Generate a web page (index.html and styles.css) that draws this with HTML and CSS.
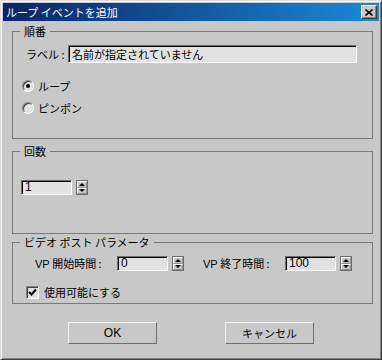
FILE: index.html
```html
<!doctype html>
<html lang="ja">
  <head>
    <meta charset="utf-8">
    <title>ループ イベントを追加</title>
    <link rel="stylesheet" href="styles.css">
  </head>
  <body>
    <div class="window">
      <div class="titlebar">
        <span class="title">ループ イベントを追加</span>
        <div class="close">
          <svg width="8" height="7" viewBox="0 0 8 7"><path d="M0.5 0.5 L7.5 6.5 M7.5 0.5 L0.5 6.5" stroke="#000" stroke-width="1.6" fill="none"/></svg>
        </div>
      </div>

      <div class="content">
        <!-- 順番 -->
        <div class="group group-order">
          <div class="legend">順番</div>
          <div class="label-row">
            <span class="label">ラベル :</span>
            <div class="field field-name">名前が指定されていません</div>
          </div>
          <div class="radio-row radio-first"><span class="radio checked"></span>ループ</div>
          <div class="radio-row"><span class="radio"></span>ピンポン</div>
        </div>

        <!-- 回数 -->
        <div class="group group-count">
          <div class="legend">回数</div>
          <div class="count-row">
            <div class="field num">1</div>
            <div class="spin"><span class="up"></span><span class="down"></span></div>
          </div>
        </div>

        <!-- ビデオ ポスト -->
        <div class="group group-vp">
          <div class="legend">ビデオ ポスト パラメータ</div>
          <div class="vp-row">
            <span class="vp-label"><span class="latin">VP</span> 開始時間 :</span>
            <div class="field num">0</div>
            <div class="spin"><span class="up"></span><span class="down"></span></div>
            <span class="vp-label vp-end"><span class="latin">VP</span> 終了時間 :</span>
            <div class="field num">100</div>
            <div class="spin"><span class="up"></span><span class="down"></span></div>
          </div>
          <div class="check-row">
            <span class="checkbox">
              <svg width="9" height="9" viewBox="0 0 9 9"><path d="M1 4 L3.5 6.5 L8 1.5" stroke="#000" stroke-width="2" fill="none"/></svg>
            </span>使用可能にする
          </div>
        </div>

        <div class="buttons">
          <button class="btn latin">OK</button>
          <button class="btn">キャンセル</button>
        </div>
      </div>
    </div>
  </body>
</html>
```

FILE: styles.css
```css
* {
  margin: 0;
  padding: 0;
  box-sizing: border-box;
}

body {
  font-family: "Noto Sans CJK JP", sans-serif;
  font-size: 11px;
  line-height: 14px;
  color: #000;
  background: #c8c8c8;
}

.latin {
  font-family: "Liberation Sans", "Noto Sans CJK JP", sans-serif;
}

.window {
  width: 382px;
  height: 360px;
  padding: 2px;
  background: #c8c8c8;
  border: 1px solid;
  border-color: #dcdcdc #404040 #404040 #dcdcdc;
  box-shadow: inset 1px 1px #fff, inset -1px -1px #808080;
}

.titlebar {
  height: 18px;
  display: flex;
  align-items: center;
  justify-content: space-between;
  padding: 0 2px 0 3px;
  background: linear-gradient(to right, #0a246a, #1a8ad6);
  color: #fff;
}

.title {
  font-size: 11px;
}

.close {
  width: 16px;
  height: 14px;
  display: flex;
  align-items: center;
  justify-content: center;
  background: #c8c8c8;
  border: 1px solid;
  border-color: #fff #404040 #404040 #fff;
  box-shadow: inset -1px -1px #808080;
}

.content {
  padding: 0 6px 0 9px;
}

.group {
  border: 1px solid #7a7a7a;
}

.legend {
  width: max-content;
  margin: -8px 0 0 7px;
  padding: 0 4px;
  background: #c8c8c8;
}

.group-order {
  margin-top: 10px;
  height: 108px;
}

.group-count {
  margin-top: 12px;
  height: 83px;
}

.group-vp {
  margin-top: 8px;
  height: 62px;
}

.field {
  background: #e2e2e2;
  border: 1px solid;
  border-color: #6e6e6e #fff #fff #6e6e6e;
  box-shadow: inset 1px 1px #000;
  padding-left: 3px;
  white-space: nowrap;
  overflow: hidden;
}

.label-row {
  margin-top: 7px;
  padding-left: 13px;
  display: flex;
  align-items: center;
}

.label {
  width: 42px;
}

.field-name {
  width: 289px;
  height: 18px;
  line-height: 15px;
  padding-top: 1px;
}

.radio-row {
  display: flex;
  align-items: center;
  height: 14px;
  margin-top: 8px;
  padding-left: 9px;
}

.radio-first {
  margin-top: 16px;
}

.radio {
  position: relative;
  width: 12px;
  height: 12px;
  margin-right: 4px;
  border-radius: 50%;
  border: 1px solid;
  border-color: #808080 #fff #fff #808080;
  box-shadow: inset 1px 1px #404040;
  background: #e2e2e2;
}

.radio.checked::after {
  content: "";
  position: absolute;
  left: 3px;
  top: 3px;
  width: 4px;
  height: 4px;
  border-radius: 50%;
  background: #000;
}

.num {
  width: 51px;
  height: 15px;
  line-height: 12px;
  font-family: "Liberation Sans", sans-serif;
  font-size: 12px;
}

.count-row {
  display: flex;
  margin-top: 22px;
  padding-left: 8px;
}

.spin {
  display: flex;
  flex-direction: column;
  width: 12px;
  height: 15px;
  margin-left: 4px;
  border: 1px solid #6e6e6e;
}

.spin span {
  flex: 1;
  display: flex;
  align-items: center;
  justify-content: center;
  border: 1px solid;
  border-color: #fff #909090 #909090 #fff;
}

.spin .up::after {
  content: "";
  border: 3px solid transparent;
  border-top: none;
  border-bottom: 3px solid #000;
}

.spin .down::after {
  content: "";
  border: 3px solid transparent;
  border-bottom: none;
  border-top: 3px solid #000;
}

.vp-row {
  display: flex;
  align-items: center;
  margin-top: 7px;
  padding-left: 22px;
}

.vp-label {
  width: 82px;
}

.vp-end {
  margin-left: 19px;
}

.check-row {
  display: flex;
  align-items: center;
  height: 14px;
  margin-top: 14px;
  padding-left: 13px;
}

.checkbox {
  width: 13px;
  height: 13px;
  margin-right: 5px;
  display: flex;
  align-items: center;
  justify-content: center;
  background: #e2e2e2;
  border: 1px solid;
  border-color: #808080 #fff #fff #808080;
  box-shadow: inset 1px 1px #404040;
}

.buttons {
  display: flex;
  gap: 68px;
  margin-top: 18px;
  padding-left: 56px;
}

.btn {
  width: 89px;
  height: 22px;
  background: #c8c8c8;
  border: 1px solid;
  border-color: #f0f0f0 #6e6e6e #6e6e6e #f0f0f0;
  font-family: "Noto Sans CJK JP", sans-serif;
  font-size: 11px;
  color: #000;
}

.btn.latin {
  font-family: "Liberation Sans", sans-serif;
  font-size: 12px;
}
```
